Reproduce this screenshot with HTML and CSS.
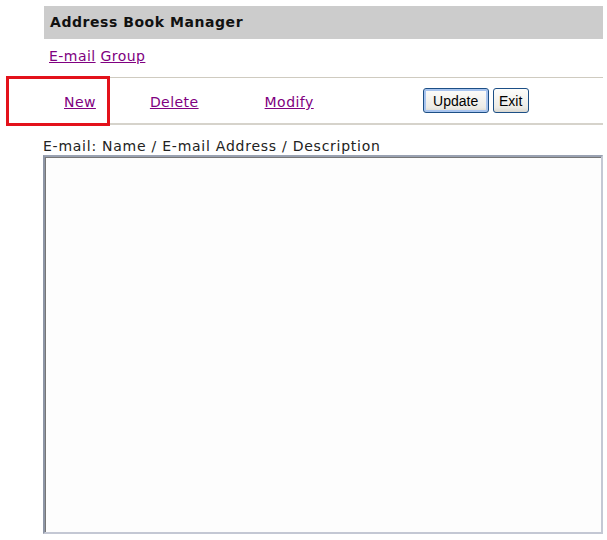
FILE: index.html
```html
<!DOCTYPE html>
<html lang="en">
<head>
    <meta charset="UTF-8">
    <title>Address Book Manager</title>
    <link rel="stylesheet" href="styles.css">
</head>
<body>
    <div class="page">
        <div class="title">Address Book Manager</div>
        <div class="groups">
            <a href="#">E-mail</a> <a href="#">Group</a>
        </div>
        <div class="actions">
            <a href="#" class="act act-new">New</a>
            <a href="#" class="act act-delete">Delete</a>
            <a href="#" class="act act-modify">Modify</a>
            <div class="buttons">
                <button class="btn btn-default">Update</button>
                <button class="btn btn-exit">Exit</button>
            </div>
        </div>
        <div class="label">E-mail: Name / E-mail Address / Description</div>
        <div class="listbox"></div>
    </div>
    <div class="highlight"></div>
</body>
</html>
```

FILE: styles.css
```css
body {
    margin: 0;
    background: #fff;
    font-family: 'DejaVu Sans', Verdana, sans-serif;
    font-size: 14px;
    letter-spacing: 0.45px;
    color: #222;
}

.page {
    margin-left: 44px;
    width: 559px;
    padding-top: 6px;
}

a {
    color: #800080;
}

.title {
    background: #cccccc;
    height: 33px;
    line-height: 33px;
    padding-left: 6px;
    font-weight: bold;
    letter-spacing: 0.55px;
    color: #111;
}

.groups {
    height: 38px;
    line-height: 34px;
    padding-left: 5px;
}

.actions {
    display: flex;
    align-items: center;
    height: 45px;
    border-top: 1px solid #cfcbc0;
    border-bottom: 2px solid #d6d3cb;
}

.act {
    padding-top: 3px;
}

.act-new {
    margin-left: 20px;
}

.act-delete {
    margin-left: 54px;
}

.act-modify {
    margin-left: 66px;
}

.buttons {
    display: flex;
    gap: 4px;
    margin-left: 109px;
}

.btn {
    font-family: 'Liberation Sans', Arial, sans-serif;
    font-size: 14px;
    letter-spacing: 0;
    height: 25px;
    padding: 0 5px;
    color: #000;
    background: linear-gradient(#fdfdfb, #ecebe6 80%, #d9d7cf);
    border: 1px solid #1c4f86;
    border-radius: 3px;
}

.btn-default {
    width: 66px;
    box-shadow: inset 0 0 0 2px #a8c4ee;
}

.btn-exit {
    width: 36px;
    padding: 0;
}

.label {
    margin-top: 13px;
    margin-left: -1px;
    height: 17px;
    line-height: 17px;
    letter-spacing: 0.75px;
}

.listbox {
    margin-left: -1px;
    height: 375px;
    background: #fdfdfd;
    border-top: 2px solid #9aa2b2;
    border-left: 2px solid #8e96a6;
    border-right: 2px solid #c4c8d4;
    border-bottom: 2px solid #c4c8d4;
    box-shadow: inset 1px 1px 0 #777;
}

.highlight {
    position: absolute;
    left: 6px;
    top: 76px;
    width: 98px;
    height: 44px;
    border: 3px solid #e3121b;
}
```
